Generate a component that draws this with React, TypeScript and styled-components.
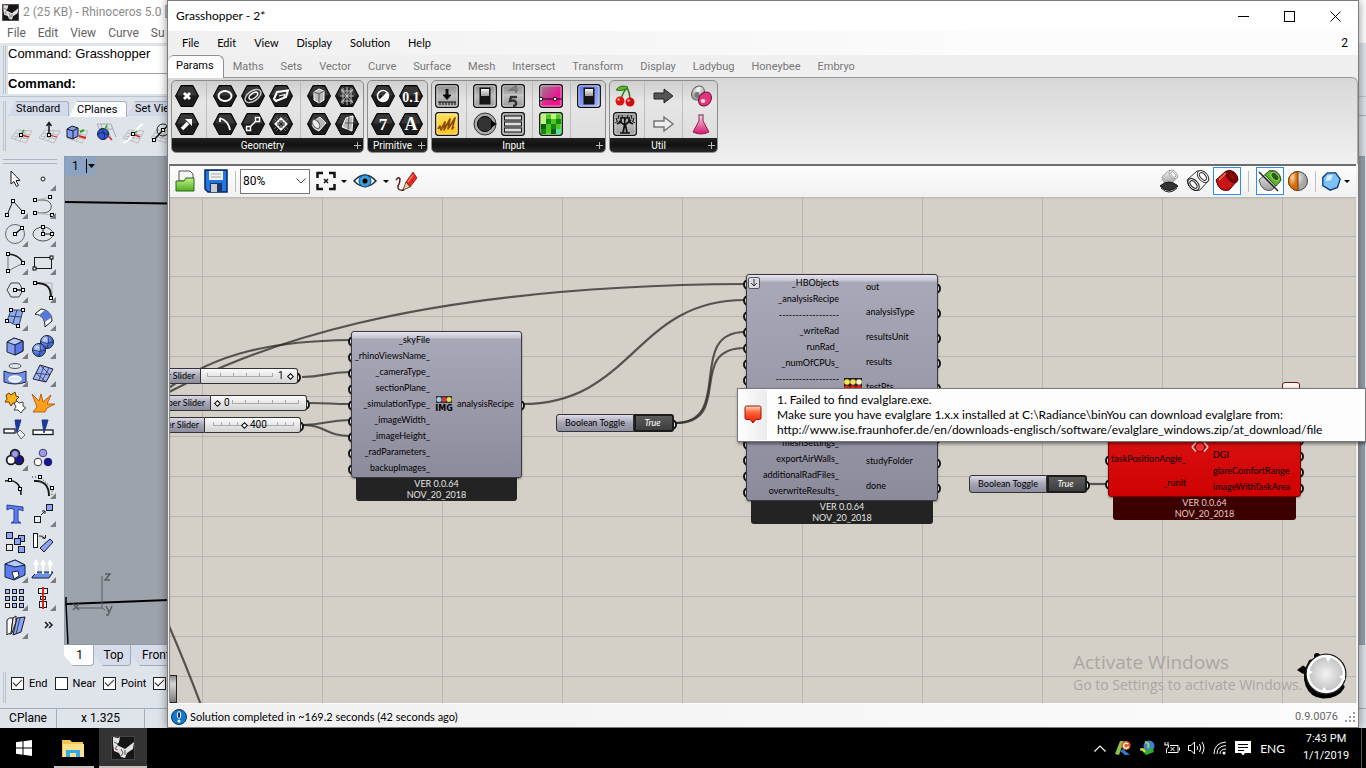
import React, { useState } from 'react';
import styled, { createGlobalStyle, css } from 'styled-components';

const UI = 'Roboto, "Open Sans", sans-serif';
const HUMAN = 'Lato, "Open Sans", sans-serif';
const SYS = '"Liberation Sans", Arial, sans-serif';

const Global = createGlobalStyle`
  * { box-sizing: border-box; }
  body { margin: 0; font-family: ${UI}; font-size: 11px; color: #000; overflow: hidden; }
  button, select, input { font: inherit; color: inherit; margin: 0; }
  button { padding: 0; border: 0; background: none; }
  svg { display: block; flex: none; }
`;

/* ---------- desktop ---------- */
const Desktop = styled.div`
  display: flex; flex-direction: column; height: 100vh; overflow: hidden;
`;
const Work = styled.main`
  position: relative; flex: 1; min-height: 0;
`;

/* ---------- Rhino ---------- */
const RhinoWindow = styled.section`
  display: flex; flex-direction: column; height: 100%;
  background: #dfe3ea; overflow: hidden; font-family: ${UI};
`;
const RhinoTitle = styled.header`
  display: flex; align-items: center; gap: 4px; height: 24px; padding-left: 2px;
  background: #fff; color: #8b8b8b; font-size: 12px; white-space: nowrap;
  span { max-width: 144px; overflow: hidden; }
`;
const RhinoMenuBar = styled.div`
  height: 19px; background: #fff;
`;
const RhinoMenu = styled.nav`
  display: flex; max-width: 167px; height: 19px; padding-left: 7px; gap: 12px; overflow: hidden;
  button { color: #5f5f5f; font-size: 12px; line-height: 19px; }
`;
const GripRow = styled.div`
  display: flex; gap: 2px; padding: 3px 10px 2px 3px; height: 54px;
  border-bottom: 1px solid #bcc3d0;
`;
const Grip = styled.i`
  width: 3px; border: solid #b9c1ce; border-width: 0 1px;
`;
const CommandPanel = styled.div`
  flex: 1; display: flex; flex-direction: column; background: #fff; font: 13px ${SYS};
  p { margin: 0; height: 28px; line-height: 15px; border-bottom: 1px solid #9aa2b1; }
  label { display: flex; align-items: center; font-weight: bold; flex: 1; padding-bottom: 2px; }
  input { flex: 1; border: 0; outline: 0; background: none; height: 16px; }
`;
const ToolbarBlock = styled.div`
  display: flex; gap: 2px; height: 59px; padding: 4px 0 5px 3px;
`;
const ToolbarColumn = styled.div`
  flex: 1; min-width: 0;
`;
const ToolTabs = styled.div`
  display: flex; height: 15px; border-bottom: 1px solid #a8b1c2;
`;
const ToolTab = styled.button<{ $on?: boolean; $w: number }>`
  flex: none; width: ${p => p.$w}px; height: ${p => (p.$on ? 16 : 15)}px; padding-left: 8px;
  font-size: 11px; line-height: 14px; position: relative; text-align: left;
  background: ${p => (p.$on ? '#fbfcfe' : '#d3d9e8')};
  border: 1px solid #a8b1c2; border-bottom: 0; border-left: 0;
  border-radius: 0 3px 0 0;
  clip-path: polygon(8px 0, 100% 0, 100% 100%, 0 100%);
`;
const ToolStrip = styled.div`
  display: flex; align-items: center; height: 33px; gap: 4px; padding-left: 1px;
  button { width: 24px; height: 24px; flex: none; }
`;
const RhinoBody = styled.div`
  flex: 1; min-height: 0; display: flex;
`;
const Sidebar = styled.aside`
  flex: none; width: 64px; padding: 3px 0 0 1px; overflow: hidden;
  &::before { content: ''; display: block; height: 3px; width: 54px; margin-left: 2px; border: solid #aab4c6; border-width: 1px 0; }
`;
const ToolGrid = styled.div`
  display: grid; grid-template-columns: 28px 28px; grid-auto-rows: 28px;
`;
const Tool = styled.button<{ $fly?: boolean }>`
  position: relative; display: grid; place-items: center;
  ${p => p.$fly && css`
    &::after {
      content: ''; position: absolute; right: 1px; bottom: 1px;
      border: solid transparent; border-width: 0 0 6px 6px; border-bottom-color: #7d7d7d;
    }
  `}
`;
const ViewColumn = styled.div`
  flex: 1; min-width: 0; display: flex; flex-direction: column;
`;
const Viewport = styled.div`
  flex: 1; min-height: 0; display: flex; flex-direction: column; justify-content: space-between;
  background: #9da3ab; border: 1px solid #8b9bb0; margin-right: 1px; overflow: hidden;
`;
const ViewLabel = styled.button`
  display: flex; align-items: center; align-self: flex-start; height: 18px; width: 30px; padding-left: 7px;
  gap: 7px; background: #8ba4c4; font-size: 12px;
`;
const ViewTabs = styled.div`
  display: flex; height: 22px;
`;
const ViewTab = styled.button<{ $on?: boolean; $w: number }>`
  flex: none; width: ${p => p.$w}px; height: 21px; padding-left: ${p => (p.$on ? 2 : 3)}px; font-size: 12px;
  background: ${p => (p.$on ? '#fff' : '#d7dcea')};
  border: 1px solid #a0aabc; border-top: 0; border-left: 0; border-radius: 0 0 4px 0;
  clip-path: polygon(0 0, 100% 0, 100% 100%, 9px 100%, 0 50%);
`;
const Osnap = styled.div`
  display: flex; gap: 3px; height: 41px; padding: 5px 0 5px 3px;
`;
const SnapList = styled.div`
  display: flex; gap: 7px; padding: 4px 0 0 2px; align-items: flex-start;
`;
const Snap = styled.label`
  display: flex; align-items: center; gap: 5px; font-size: 11px; height: 14px; white-space: nowrap;
  input {
    appearance: none; width: 13px; height: 13px; border: 1px solid #222; background: #fff; display: grid; place-items: center;
  }
  input:checked::after {
    content: ''; width: 8px; height: 4px; margin-top: -3px; border: solid #222; border-width: 0 0 1px 1px; transform: rotate(-45deg);
  }
`;
const RhinoStatus = styled.footer`
  display: flex; height: 20px; border-top: 1px solid #a2acbd;
`;
const StatusCell = styled.div<{ $w: number }>`
  flex: none; width: ${p => p.$w}px; border-right: 1px solid #a2acbd; text-align: center; font-size: 12px; line-height: 19px;
`;

/* ---------- Grasshopper window ---------- */
const GhWindow = styled.section`
  position: absolute; left: 167px; right: 7px; top: 0; bottom: 0;
  display: flex; flex-direction: column; border: 1px solid #7c7c7c; background: #f0f0f0;
  box-shadow: 0 0 9px rgba(0, 0, 0, .45);
`;
const GhTitle = styled.header`
  display: flex; align-items: center; height: 30px; background: #fff; padding-left: 8px; font-size: 12px;
`;
const GhName = styled.h1`
  flex: 1; margin: 0; font: 12px ${HUMAN}; padding-bottom: 2px;
`;
const WinButton = styled.button`
  width: 46px; height: 30px; display: grid; place-items: center;
`;
const GhMenu = styled.nav`
  display: flex; align-items: center; gap: 18px; height: 24px; padding: 0 10px 1px 14px;
  background: linear-gradient(90deg, #f0f0f0, #fcfcfc 70%);
  button { font: 11px ${HUMAN}; }
  span { margin-left: auto; font-size: 12px; }
`;
const RibbonTabs = styled.div`
  display: flex; height: 23px; position: relative; z-index: 1;
`;
const RibbonTab = styled.button<{ $on?: boolean }>`
  height: 23px; padding: ${p => (p.$on ? '0 9px 3px 8px' : '0 8px 0 9px')}; color: ${p => (p.$on ? '#000' : '#777')};
  font-size: 11px;
  ${p => p.$on && css`
    background: #fff; border: 1px solid #8f8f8f; border-width: 1px 1px 0 0; border-radius: 6px 6px 0 0;
  `}
`;
const Ribbon = styled.div`
  display: flex; gap: 3px; height: 87px; padding: 2px 3px 0;
  margin-top: -1px; border-top: 1px solid #999; border-right: 1px solid #aaa; border-radius: 0 6px 0 0;
  background: linear-gradient(#d8d8d8, #f0f0f0);
`;
const Group = styled.div`
  display: flex; flex-direction: column; height: 73px; border: 1px solid #8c8c8c; border-radius: 5px; overflow: hidden;
  background: linear-gradient(#cfcfcf, #e6e6e6 30%, #dadada);
`;
const GroupTools = styled.div`
  display: flex; flex: 1; padding: 1px 2px 0 1px;
`;
const GroupBlock = styled.div`
  display: grid; grid-auto-flow: column; grid-template-rows: 28px 28px; grid-auto-columns: 28px;
  & + & { border-left: 1px solid #bdbdbd; margin-left: 5px; padding-left: 4px; }
  button { display: grid; place-items: center; }
`;
const GroupName = styled.div`
  display: flex; align-items: center; height: 14px; background: linear-gradient(#222, #111 50%, #2a2a2a); color: #fff; font-size: 10px;
  span { flex: 1; text-align: center; padding-right: 10px; }
  button { width: 12px; height: 12px; display: grid; place-items: center; margin-left: -12px; }
`;
const CanvasPanel = styled.div`
  flex: 1; min-height: 0; display: flex; flex-direction: column; margin-left: 1px; margin-right: 2px;
  border: solid #6d6d6d; border-width: 2px 0 0 1px; border-left-color: #8a8a8a;
`;
const CanvasBar = styled.div`
  display: flex; align-items: center; height: 31px; padding: 0 5px 1px 0; background: linear-gradient(#fdfdfd, #f1f1f1);
`;
const BarButton = styled.button<{ $w: number; $on?: boolean }>`
  display: grid; place-items: center; width: ${p => p.$w}px; height: 28px;
  ${p => p.$on && css`border: 1px solid #2e8cf0; background: #fff;`}
`;
const BarRule = styled.i<{ $m: number }>`
  width: 1px; height: 21px; background: #bdbdbd; margin: 0 ${p => p.$m}px;
`;
const Caret = styled.i`
  width: 0; height: 0; border: solid transparent; border-width: 3px 3px 0; border-top-color: #000; margin: 0 1px;
`;
const Spacer = styled.div`
  flex: 1;
`;
const Combo = styled.label`
  display: flex; align-items: center; width: 70px; height: 25px; margin-right: 2px; border: 1px solid #777; background: #fff;
  select { appearance: none; flex: 1; width: 100%; border: 0; background: none; padding: 0 2px; font-size: 12px; outline: 0; }
  svg { margin: 0 3px 0 -14px; pointer-events: none; }
`;
const Canvas = styled.div`
  position: relative; flex: 1; min-height: 0; overflow: hidden; font-family: ${HUMAN}; font-size: 9px;
  background-color: #d4d0c8; box-shadow: inset 0 1px 2px #b4b1aa;
  background-image: linear-gradient(#bab7b0 1px, transparent 1px), linear-gradient(90deg, #bab7b0 1px, transparent 1px);
  background-size: 100% 40px, 120px 100%; background-position: 0 39px, 32px 0;
`;
const Wires = styled.svg`
  position: absolute; inset: 0; width: 100%; height: 100%;
`;
const NodeBox = styled.article<{ $x: number; $y: number; $w: number }>`
  position: absolute; left: ${p => p.$x}px; top: ${p => p.$y}px; width: ${p => p.$w}px; isolation: isolate;
`;
const NodeBody = styled.div<{ $error?: boolean }>`
  display: grid; grid-template-columns: auto 27px 1fr; padding-bottom: 1px;
  border: 1px solid ${p => (p.$error ? '#7a0000' : '#38383e')}; border-radius: 3px;
  box-shadow: 0 1px 2px rgba(0, 0, 0, .4);
  background: ${p => p.$error
    ? 'linear-gradient(#e01818, #cf0202)'
    : 'linear-gradient(#e6e4f0, #c4c2d0 6px, #a9a8b8 7px, #8c8b9c)'};
`;
const Ports = styled.ul<{ $out?: boolean; $w?: number }>`
  display: flex; flex-direction: column; margin: 0; padding: 0; list-style: none;
  width: ${p => (p.$w ? p.$w + 'px' : 'auto')};
  li {
    position: relative; flex: 1 0 16px; display: flex; align-items: center; white-space: nowrap; padding-bottom: 2px;
    justify-content: ${p => (p.$out ? 'flex-start' : 'flex-end')};
  }
  li::before {
    content: ''; position: absolute; z-index: -1; ${p => (p.$out ? 'right' : 'left')}: -4px; top: calc(50% - 4px);
    width: 7px; height: 7px; border-radius: 50%; border: 2px solid #111; background: #fff;
  }
`;
const NodeIcon = styled.div`
  display: grid; place-items: center;
`;
const NodeFooter = styled.div<{ $error?: boolean }>`
  margin: 0 5px; height: 23px; text-align: center; line-height: 11px;
  border-radius: 0 0 3px 3px; color: ${p => (p.$error ? '#e8c8c8' : '#e4e4e4')}; background: ${p => (p.$error ? '#3c0000' : '#232323')};
`;
const Expand = styled.button`
  position: absolute; left: 2px; top: 3px; width: 12px; height: 12px; display: grid; place-items: center;
  border: 1px solid #555; border-radius: 2px; background: #dcdce4;
`;
const InlineNode = styled.div<{ $x: number; $y: number; $w: number; $h: number }>`
  position: absolute; left: ${p => p.$x}px; top: ${p => p.$y}px; width: ${p => p.$w}px; height: ${p => p.$h}px;
  isolation: isolate; display: flex;
  &::after {
    content: ''; position: absolute; z-index: -1; right: -3px; top: calc(50% - 4px); width: 7px; height: 7px;
    border-radius: 50%; border: 2px solid #111; background: #fff;
  }
`;
const NodeLabel = styled.span<{ $w: number; $center?: boolean }>`
  flex: none; width: ${p => p.$w}px; padding: 0 5px 2px; display: flex; align-items: center; white-space: nowrap;
  justify-content: ${p => (p.$center ? 'center' : 'flex-end')};
  border: 1px solid #333; border-radius: 3px 0 0 3px; background: linear-gradient(#dddbe8, #a5a4b4 50%, #8e8d9e);
`;
const Track = styled.span`
  position: relative; flex: 1; border: 1px solid #333; border-left: 0; border-radius: 0 3px 3px 0;
  background: linear-gradient(#fbfbfb, #d2d2d2);
  svg { position: absolute; top: 0; left: 0; }
  input { position: absolute; inset: 0; width: 100%; height: 100%; appearance: none; background: none; padding: 0 4px; }
  input::-webkit-slider-thumb {
    appearance: none; width: 5px; height: 5px; border: 1px solid #000; background: #fff; transform: rotate(45deg);
  }
`;
const Reading = styled.output<{ $x: number }>`
  position: absolute; left: ${p => p.$x}px; top: 0; height: 100%; display: flex; align-items: center; padding-bottom: 2px;
  font: 10px ${UI};
`;
const PanelStub = styled.div`
  position: absolute; left: -2px; top: 478px; width: 9px; height: 28px;
  border: 1px solid #222; background: linear-gradient(#8c8c8c, #d6d6d6 30%, #7c7c7c);
`;
const ToggleButton = styled.button`
  flex: 1; border: 2px solid #1d1d1d; border-radius: 0 3px 3px 0; color: #fff; font-style: italic;
  background: linear-gradient(#5c5c5c, #3d3d3d); padding: 0 3px 2px 0;
`;
const Balloon = styled.i`
  position: absolute; left: 1112px; top: 185px; width: 18px; height: 16px;
  border: 1px solid #6b1a10; border-radius: 3px; background: linear-gradient(#fff, #ffb090);
`;
const Watermark = styled.div`
  position: absolute; right: 51px; bottom: 9px; width: 232px; color: #aaa7a1; white-space: nowrap;
  font-family: "Open Sans", sans-serif; font-size: 14px; line-height: 19px;
  strong { display: block; font-size: 19px; font-weight: 400; line-height: 26px; }
`;
const Compass = styled.svg`
  position: absolute; right: 7px; bottom: 2px;
`;
const GhStatus = styled.footer`
  display: flex; align-items: center; gap: 3px; height: 24px; padding: 2px 2px 0 3px; border-top: 1px solid #fff;
  background: linear-gradient(90deg, #f0f0f0, #fcfcfc); font: 11px ${HUMAN};
  span { flex: 1; padding-bottom: 1px; }
  em { font: 11px ${UI}; color: #666; margin-right: 3px; }
`;
const Tooltip = styled.div`
  position: absolute; z-index: 5; left: 737px; right: 0; top: 388px; height: 54px; display: flex; gap: 10px;
  border: 1px solid #767676; background: #fdfdfd; box-shadow: 1px 2px 3px rgba(0, 0, 0, .45); white-space: nowrap;
  font: 12px/15px ${HUMAN};
  p { margin: 0; padding-top: 3px; }
`;
const TooltipIcon = styled.div`
  width: 29px; margin: 1px 0; padding-bottom: 1px; display: grid; place-items: center; background: linear-gradient(90deg, #fdfdfd, #ececec);
`;

/* ---------- task bar ---------- */
const TaskBar = styled.footer`
  display: flex; flex: none; height: 40px; background: #000; color: #fff;
`;
const TaskButton = styled.button<{ $on?: boolean; $open?: boolean }>`
  position: relative; width: 48px; display: grid; place-items: center; background: ${p => (p.$on ? '#333' : 'none')};
  margin-right: 1px; margin-left: ${p => (p.$on ? 1 : 0)}px;
  ${p => p.$open && css`
    &::after {
      content: ''; position: absolute; bottom: 0; left: ${p.$on ? 0 : 5}px; right: ${p.$on ? 0 : 3}px; height: 2px; background: #c9c1bd;
    }
  `}
`;
const Tray = styled.div`
  margin-left: auto; display: flex; align-items: center; gap: 8px; padding-right: 4px;
  button { display: grid; place-items: center; }
`;
const Lang = styled.button`
  && { font: 12px ${HUMAN}; margin-left: 1px; }
`;
const Clock = styled.time`
  width: 66px; margin-right: -6px; text-align: center; font: 11px/17px ${UI}; padding-bottom: 2px;
`;
const PeekEdge = styled.i`
  width: 1px; align-self: stretch; background: #555;
`;

/* ---------- icons ---------- */
const Ink = '#1a1a1a';
const Blue = '#7f9cf5';
const Dot = ({ x, y }: { x: number; y: number }) => (
  <rect x={x - 1.5} y={y - 1.5} width="3" height="3" fill="#fff" stroke="#000" />
);
const Ic = ({ s = 24, children }: { s?: number; children: React.ReactNode }) => (
  <svg width={s} height={s} viewBox="0 0 24 24" fill="none" stroke={Ink} strokeWidth="1" aria-hidden="true">{children}</svg>
);
const Mesh = () => (
  <path d="M2 17 8 9 23 10M2 17 17 22 23 10M6 12 21 14M4 15 19 18M6 18.500 12 9.500M11 20 17 9.700" stroke="#b4b4b4" strokeWidth=".8" />
);
const Hex = ({ children }: { children?: React.ReactNode }) => (
  <svg width="26" height="24" viewBox="0 0 26 24" fill="none" stroke="#fff" strokeWidth="2" aria-hidden="true">
    <polygon points="7,1.5 19,1.5 24.5,12 19,22.5 7,22.5 1.5,12" fill="#1c1c1c" stroke="#000" strokeWidth="1" strokeLinejoin="round" />
    <path d="M7.500 2.600h11L23 11.500H3z" fill="#4a4a4a" stroke="none" opacity=".6" />
    {children}
  </svg>
);
const Box = ({ fill = 'url(#steel)', children }: { fill?: string; children?: React.ReactNode }) => (
  <svg width="24" height="24" viewBox="0 0 24 24" fill="none" stroke="#111" aria-hidden="true">
    <rect x=".7" y=".7" width="22.600" height="22.600" rx="2.500" fill={fill} stroke="#111" strokeWidth="1.300" />
    <rect x="1.900" y="1.900" width="20.200" height="20.200" rx="1.500" stroke="#fff" strokeOpacity=".55" />
    {children}
  </svg>
);
const Glyph = ({ children, size = 17 }: { children: string; size?: number }) => (
  <text x="13" y="18" textAnchor="middle" fontFamily="Liberation Serif, serif" fontWeight="bold" fontSize={size} fill="#fff" stroke="none">{children}</text>
);
const Defs = () => (
  <svg width="0" height="0" aria-hidden="true">
    <defs>
      <linearGradient id="steel" x2="0" y2="1"><stop stopColor="#8a8a8a" /><stop offset=".5" stopColor="#bdbdbd" /><stop offset="1" stopColor="#9a9a9a" /></linearGradient>
      <linearGradient id="gold" x2="0" y2="1"><stop stopColor="#ffdf60" /><stop offset="1" stopColor="#ffc61a" /></linearGradient>
      <linearGradient id="pink" x2="1" y2="1"><stop stopColor="#8d8d8d" /><stop offset=".6" stopColor="#e81890" /><stop offset="1" stopColor="#ff0a90" /></linearGradient>
      <linearGradient id="indigo" x2="1" y2="1"><stop stopColor="#5a74e8" /><stop offset="1" stopColor="#a9baff" /></linearGradient>
      <radialGradient id="bead" cx=".35" cy=".3"><stop stopColor="#d8e2ff" /><stop offset="1" stopColor="#4666d8" /></radialGradient>
      <radialGradient id="dial"><stop stopColor="#f4f4f4" /><stop offset="1" stopColor="#bdbdbd" /></radialGradient>
      <radialGradient id="pearl" cx=".35" cy=".3"><stop stopColor="#fff" /><stop offset="1" stopColor="#a8a8a8" /></radialGradient>
      <radialGradient id="amber" cx=".4" cy=".3"><stop stopColor="#ffd9a0" /><stop offset="1" stopColor="#d46a08" /></radialGradient>
      <linearGradient id="alert" x2="0" y2="1"><stop stopColor="#ffd9c8" /><stop offset=".35" stopColor="#ff6a3c" /><stop offset="1" stopColor="#e81404" /></linearGradient>
      <linearGradient id="leaf" x2="0" y2="1"><stop stopColor="#c6ef92" /><stop offset="1" stopColor="#4fb01e" /></linearGradient>
      <linearGradient id="rose" x2="0" y2="1"><stop stopColor="#fbd8e6" /><stop offset="1" stopColor="#d41468" /></linearGradient>
      <linearGradient id="wire" x2="0" y2="1"><stop stopColor="#f4f4f4" /><stop offset="1" stopColor="#9c9c9c" /></linearGradient>
    </defs>
  </svg>
);

const RhinoMark = ({ s = 17 }: { s?: number }) => (
  <svg width={s} height={s} viewBox="0 0 24 24" aria-hidden="true">
    <rect x=".5" y=".5" width="23" height="23" fill="#161616" stroke="#444" />
    <path d="M2 1 7 2 9 1 8 6 6 9 10 11 14 13 23 6 22 13 16 17 14 22 10 21 8 17 3 15 2 8Z" fill="#e2e2e2" />
    <path d="M3 6 7 8M6 10 4 13M10 13 12 17 10 20M14 14 14 19" stroke="#555" strokeWidth="1" fill="none" />
    <path d="M4.500 13 6.500 14" stroke="#c33" strokeWidth="1.300" />
  </svg>
);

type ToolDef = [string, React.ReactNode, boolean?];
const cplaneTools: ToolDef[] = [
  ['Set CPlane origin', <Ic><Mesh /><path d="M12 14 20 16" stroke="#d22" strokeWidth="1.500" /><path d="M12 14 15 9" stroke="#2a2" strokeWidth="1.500" /><Dot x={12} y={14} /></Ic>],
  ['Set CPlane elevation', <Ic><Mesh /><path d="M12 14 20 16" stroke="#d22" /><path d="M12 13V2M9.500 5 12 1.500 14.500 5" strokeWidth="1.500" /><Dot x={12} y={14} /></Ic>],
  ['Set CPlane to object', <Ic><Mesh /><path d="M2 8 7 5 13 7V15L8 18 2 16Z" fill={Blue} /><path d="M2 8 8 10 13 7M8 10V18" /><path d="M14 15 21 17" stroke="#d22" strokeWidth="2" /><path d="M15 11 19 9" stroke="#2a2" strokeWidth="2" /></Ic>],
  ['Set CPlane to surface', <Ic><path d="M4 3H18L23 16M8 3 12 18M13 3 18 18M6 8H20M4 3 9 14" stroke="#aaa" /><circle cx="10" cy="13" r="5.500" fill="#2f56d8" stroke="#123" /><path d="M8 8Q13 12 11 18M5 13Q10 10 15 14" stroke="#123" strokeWidth=".8" /><path d="M15 15 19 19" stroke="#d22" strokeWidth="1.500" /><path d="M12 8 14 4" stroke="#2a2" strokeWidth="1.500" /></Ic>],
  ['CPlane perpendicular to curve', <Ic><Mesh /><path d="M2 22C10 20 10 14 12 13S17 5 22 3" stroke="#fff" strokeWidth="2" /><path d="M12 13 19 16" stroke="#d22" strokeWidth="1.500" /><path d="M12 13 16 10" stroke="#2a2" strokeWidth="1.500" /><Dot x={12} y={13} /></Ic>],
  ['Rotate CPlane', <Ic><Mesh /><circle cx="14" cy="9" r="6" /><path d="M5 19 14 9 20 4" strokeWidth="1.500" /><Dot x={5} y={19} /><Dot x={14} y={9} /></Ic>],
];

const sideTools: ToolDef[] = [
  ['Select', <Ic><path d="M8 5V18L11 15.500 13.500 20.500 15.500 19.500 13 14.500H17Z" fill="#fff" /></Ic>],
  ['Point', <Ic><circle cx="12" cy="13" r="2" fill="#fff" /></Ic>, true],
  ['Polyline', <Ic><path d="M4 21 10 7 20 18" /><Dot x={4} y={21} /><Dot x={10} y={7} /><Dot x={20} y={18} /></Ic>, true],
  ['Control point curve', <Ic><path d="M5 6H12C23 6 23 19 12 19H5" stroke="#555" /><path d="M5 6 19 3M5 19 20 21" stroke="#bbb" /><Dot x={4} y={6} /><Dot x={19} y={3} /><Dot x={4} y={19} /><Dot x={21} y={21} /></Ic>, true],
  ['Circle', <Ic><circle cx="12" cy="12" r="9.500" stroke="#666" /><path d="M12 12 19 6" strokeWidth="1.500" /><Dot x={12} y={12} /><Dot x={19} y={6} /></Ic>, true],
  ['Ellipse', <Ic><ellipse cx="12" cy="12" rx="10" ry="7" stroke="#555" /><path d="M12 5V12H21" /><Dot x={12} y={5} /><Dot x={12} y={12} /><Dot x={21} y={12} /></Ic>, true],
  ['Arc', <Ic><path d="M5 4C12 4 18 8 20 13" strokeWidth="1.500" /><path d="M5 4V21L20 13" stroke="#777" /><Dot x={5} y={4} /><Dot x={20} y={13} /><Dot x={5} y={21} /></Ic>, true],
  ['Rectangle', <Ic><rect x="3.500" y="7.500" width="17" height="11" /><Dot x={20.5} y={7.5} /><Dot x={3.5} y={18.5} /></Ic>, true],
  ['Polygon', <Ic><path d="M8 5H16L20 12 16 19H8L4 12Z" stroke="#444" /><path d="M12 12H20" strokeWidth="1.500" /><Dot x={12} y={12} /><Dot x={20} y={12} /></Ic>, true],
  ['Fillet curves', <Ic><path d="M4 5H21V20" stroke="#aaa" /><path d="M4 5C16 5 20 9 20 20" strokeWidth="2" /><Dot x={4} y={5} /><Dot x={20} y={20} /></Ic>, true],
  ['Surface from points', <Ic><path d="M8 4H20L17 16 15 20 4 15Z" fill="#8ea8f4" stroke="#345" /><path d="M6 10 18 11M14 4 10 17" stroke="#345" /><Dot x={8} y={4} /><Dot x={20} y={4} /><Dot x={4} y={15} /><Dot x={15} y={20} /></Ic>, true],
  ['Blend surface', <Ic><path d="M4 8 10 3C17 4 21 8 21 15L14 21C14 13 11 9 4 8Z" fill="#fff" /><path d="M8 9 14 4C18 6 20 8 21 11L14 16C13 12 11 10 8 9Z" fill="#5878e0" stroke="none" /></Ic>, true],
  ['Box', <Ic><path d="M4 8 11 4 20 7V17L12 21 4 18Z" fill={Blue} stroke="#223" /><path d="M4 8 12 11 20 7 11 4Z" fill="#b9c8fb" stroke="#223" /><path d="M12 11 20 7V17L12 21Z" fill="#5b78e8" stroke="#223" /></Ic>, true],
  ['Boolean union', <Ic><circle cx="16" cy="8" r="6.500" fill="url(#bead)" stroke="#123" /><circle cx="8" cy="16" r="6.500" fill="url(#bead)" stroke="#123" /><path d="M2 16Q8 19 14 16M9 10Q11 16 8 22M10 8Q16 11 22 8M17 2Q19 8 16 14" stroke="#235" strokeWidth=".8" /></Ic>, true],
  ['Project to surface', <Ic><ellipse cx="12" cy="4" rx="6" ry="2.500" stroke="#555" /><path d="M1 9Q12 14 23 9V20Q12 24 1 20Z" fill="#6f90ea" stroke="#224" /><ellipse cx="12" cy="17" rx="6" ry="3" fill="#dfe7ff" stroke="#fff" strokeWidth="1.500" /></Ic>, true],
  ['Mesh', <Ic><path d="M9 3 22 7 15 20 2 17Z" fill="#9db4f6" stroke="#223" /><path d="M5 11 19 13M13 4 8 18M18 6 11 19M9 3 19 13M5 11 15 20" stroke="#335" strokeWidth=".8" /></Ic>, true],
  ['Explode plugin', <Ic><path d="M3 5 6 3 8 5 12 2 13 6 16 7 13 10 15 13 10 13 8 16 6 12 2 12 4 9Z" fill="#ffb21c" stroke="#6b3c00" /><path d="M11 13 14 11 16 13 20 12 20 16 23 18 20 20 18 23 15 20 11 20 13 17Z" fill="#fff" stroke="#444" /></Ic>],
  ['Explode', <Ic><path d="M1 4 8 11 10 4 12 12 20 5 16 14 24 14 16 18 14 22H2L6 17Z" fill="#ff9d1c" stroke="#a84c00" strokeWidth=".8" /></Ic>],
  ['Trim', <Ic><path d="M12 2H18L14 15Z" fill="#1e3a96" stroke="#1e3a96" /><rect x="1" y="11" width="11" height="4" fill="#fff" strokeWidth="1.300" /><path d="M14 15 17 12 22 17 18 21Z" fill="#eee" stroke="#666" /></Ic>],
  ['Split', <Ic><rect x="2" y="12" width="20" height="4.500" fill="#fff" strokeWidth="1.300" /><path d="M11 2H17L13 15Z" fill="#1e3a96" stroke="#1e3a96" /></Ic>],
  ['Group', <Ic><g strokeWidth="2.500"><circle cx="12" cy="8" r="4" /><circle cx="8" cy="14" r="4" /><circle cx="16" cy="14" r="4" /></g><circle cx="8" cy="14" r="3.500" fill="#fff" stroke="none" /><circle cx="16" cy="14" r="3.500" fill="#17178a" stroke="none" /><circle cx="12" cy="8" r="3.500" fill="#9a9af5" stroke="#446" /></Ic>, true],
  ['Ungroup', <Ic><circle cx="12" cy="7" r="3.800" fill="#9a9af5" stroke="#446" /><circle cx="7" cy="16" r="3.800" fill="#fff" stroke="#333" /><circle cx="17" cy="16" r="3.800" fill="#17178a" stroke="#17178a" /></Ic>],
  ['Edit points', <Ic><path d="M2 7C12 5 18 10 18 21" strokeWidth="1.500" /><Dot x={7} y={6} /><Dot x={17} y={15} /></Ic>],
  ['Control points on', <Ic><path d="M3 7C13 6 18 12 18 22" strokeWidth="2" /><path d="M1 3H9L21 14V21" strokeDasharray="1 2" /><Dot x={9} y={3} /><Dot x={21} y={14} /></Ic>, true],
  ['Text', <Ic><path d="M4 3 20 5V9L18 8 15 7.500V19L18 21H8L11 19V7L7 6.500 4 8Z" fill="#5b7df0" stroke="#24409c" /></Ic>],
  ['Move', <Ic><rect x="3.500" y="14.500" width="6" height="6" fill="#eee" /><rect x="15.500" y="2.500" width="6" height="6" fill="#8ba5f8" /><path d="M10 13 14 9M11 9H14V12" /></Ic>, true],
  ['Copy', <Ic><rect x="3.500" y="2.500" width="6" height="6" fill="#8ba5f8" /><rect x="15.500" y="5.500" width="6" height="6" fill="#8ba5f8" /><rect x="11.500" y="8.500" width="6" height="6" fill="#8ba5f8" /><rect x="3.500" y="14.500" width="6" height="6" fill="#eee" /><rect x="15.500" y="16.500" width="6" height="6" fill="#8ba5f8" /></Ic>],
  ['Rotate', <Ic><rect x="2.500" y="3.500" width="4" height="14" fill="#fff" /><path d="M8 6Q12 5 14 9M11 8H14.500V5" /><path d="M9 18 19 9 22 12 13 22Z" fill="#8ba5f8" /></Ic>],
  ['Solid tools', <Ic><path d="M2 6 12 2 22 7V17L11 22 2 19Z" fill="#5b7df0" stroke="#124" /><path d="M2 6 12 9 22 7 12 2Z" fill="#b9c8fb" stroke="#124" /><path d="M9 14 15 13 16 18 11 21Z" fill="#fff" stroke="#222" /></Ic>, true],
  ['Project', <Ic><path d="M1 19 6 14H22L18 20H1Z" fill="#6f90ea" stroke="#124" /><path d="M5 16V4M12 16V4M19 16V4M3 7 5 3 7 7M10 7 12 3 14 7M17 7 19 3 21 7" stroke="#fff" strokeWidth="2" /></Ic>, true],
  ['Array', <Ic>{[3.5, 10.5, 17.5].map(y => [2.5, 9.5, 16.5].map(x => <rect key={x + '-' + y} x={x} y={y} width="4" height="4" fill={y === 17.5 && x === 2.5 ? '#fff' : '#a9bcfa'} />))}</Ic>, true],
  ['Align', <Ic><rect x="7.500" y="2.500" width="9" height="5" fill="#eee" /><rect x="9.500" y="10.500" width="5" height="3" fill="#eee" /><rect x="8.500" y="15.500" width="7" height="6" fill="#eee" /><path d="M12 1V23" stroke="#d22" strokeWidth="2" /></Ic>, true],
  ['Bend', <Ic><path d="M4 6Q6 3 10 4L8 20Q4 19 4 21Z" fill="#fff" /><path d="M10 4 13 2V8L9 19 8 20Z" fill="#ddd" /><path d="M14 4 22 3 18 18 10 21Z" fill="#8ba5f8" /><path d="M17 4 13 20" stroke="#345" /></Ic>, true],
];

const hexGeo1 = [
  ['Point', <Hex><path d="M10 9 16 15M16 9 10 15" strokeWidth="2.800" /></Hex>],
  ['Vector', <Hex><path d="M8 17 14 11" strokeWidth="3.500" /><path d="M11 7H18V14Z" fill="#fff" stroke="none" /></Hex>],
] as ToolDef[];
const hexGeo2 = [
  ['Circle', <Hex><ellipse cx="13" cy="12" rx="6.500" ry="5" /></Hex>],
  ['Circular arc', <Hex><path d="M8 6C14 8 17 12 18 18M8 6 8 10" strokeWidth="1.800" /></Hex>],
  ['Curve', <Hex><g transform="rotate(-35 13 12)" strokeWidth="1.400"><ellipse cx="13" cy="12" rx="9" ry="5" stroke="#ccc" /><ellipse cx="13.500" cy="12" rx="5" ry="2.500" /></g></Hex>],
  ['Line', <Hex><path d="M8 17 18 7" strokeWidth="1.500" /><rect x="6.500" y="14.500" width="4" height="4" fill="#222" strokeWidth="1.500" /><rect x="15.500" y="5.500" width="4" height="4" fill="#222" strokeWidth="1.500" /></Hex>],
  ['Plane', <Hex><path d="M6 15 9 8 20 6.500 18 13 8 17Z" strokeWidth="2" /><path d="M11 12 17 10.500 16 13" strokeWidth="1.200" /></Hex>],
  ['Rectangle', <Hex><path d="M13 6.500 18.500 12 13 17.500 7.500 12Z" /><path d="M8 5 20 17M18 5 6 17M6 7 18 19M20 7 8 19" stroke="#888" strokeWidth=".7" /></Hex>],
] as ToolDef[];
const hexGeo3 = [
  ['Box', <Hex><path d="M8 8 13 5 18 7V16L13 19 8 16Z" fill="#bbb" strokeWidth="1" /><path d="M8 8 13 10 18 7M13 10V19" stroke="#555" strokeWidth="1" /></Hex>],
  ['Brep', <Hex><path d="M8 9 14 5 20 11 13 19Q7 17 6 13Z" fill="#b8b8b8" stroke="#eee" strokeWidth="1" /><ellipse cx="10" cy="12" rx="3" ry="5" transform="rotate(-35 10 12)" fill="#eee" stroke="#555" strokeWidth="1" /></Hex>],
  ['Mesh', <Hex><path d="M7 7H19M6 12H20M7 17H19M9 4V20M13 3V21M17 4V20M7 5 19 19M19 5 7 19" strokeWidth=".9" stroke="#ccc" /></Hex>],
  ['Surface', <Hex><path d="M12 6 19 4 18 19 8 15Z" fill="#bbb" strokeWidth="1" /><path d="M11 11 19 11M15 5 14 18" stroke="#555" strokeWidth="1" /></Hex>],
] as ToolDef[];
const hexPrim = [
  ['Boolean', <Hex><circle cx="13" cy="12" r="5.500" strokeWidth="1.500" /><path d="M17 8A5.500 5.500 0 0 1 9 16Z" fill="#fff" stroke="none" /></Hex>],
  ['Integer', <Hex><Glyph>7</Glyph></Hex>],
  ['Number', <Hex><Glyph size={14}>0.1</Glyph></Hex>],
  ['Text', <Hex><Glyph size={18}>A</Glyph></Hex>],
] as ToolDef[];
const inp1 = [
  ['Import', <Box><path d="M12 5V14" strokeWidth="3" /><path d="M8 11H16L12 15.500Z" fill="#000" /><path d="M3 18H21M5 18V21M8 18V21M11 18V21M14 18V21M17 18V21M20 18V21" /></Box>],
  ['Graph scribble', <Box fill="url(#gold)"><path d="M3 17 5 14 6 18 10 10 9 18 15 7 13 17 20 6 17 17 19 15" stroke="#8a4b08" strokeWidth="1.700" strokeLinejoin="round" /></Box>],
] as ToolDef[];
const inp2 = [
  ['Button', <Box><rect x="7" y="4" width="10" height="16" fill="#161616" /><rect x="8" y="5" width="8" height="7" fill="url(#wire)" stroke="none" /></Box>],
  ['Control knob', <svg width="24" height="24" viewBox="0 0 24 24" aria-hidden="true"><circle cx="12" cy="12" r="11" fill="#a9a9a9" stroke="#333" /><circle cx="12" cy="12" r="7.500" fill="#333" stroke="#000" /><path d="M18 8 23.500 12 18 16Z" /></svg>],
  ['Digit scroller', <Box><path d="M15 9V2L9 6H17" strokeWidth="2" stroke="#777" /><path d="M16 13H10L9 17C16 15 17 22 12 22" strokeWidth="2.500" stroke="#333" /><path d="M2 11H22" stroke="#ddd" strokeOpacity=".6" /></Box>],
  ['Value list', <Box><g fill="#ddd"><rect x="3.500" y="4" width="17" height="4" /><rect x="3.500" y="10" width="17" height="4" /><rect x="3.500" y="16" width="17" height="4" /></g></Box>],
] as ToolDef[];
const inp3 = [
  ['Gradient', <Box fill="url(#pink)"><path d="M1 15H23" /><circle cx="2" cy="15" r="1.800" fill="#fff" /><circle cx="16" cy="15" r="1.800" fill="#fff" /></Box>],
  ['Image sampler', <Box fill="#4ec81c"><g stroke="none"><path d="M2 2H7V7H2ZM12 2H17V7H12ZM2 7H7V12H2Z" fill="#c6f08c" /><path d="M7 7H12V12H7ZM17 7H22V12H17ZM2 17H7V22H2ZM12 12H17V17H12Z" fill="#118a12" /><path d="M17 17H22V22H17Z" fill="#4fe0b0" /><path d="M2 12H7V17H2ZM12 17H17V22H12Z" fill="#0c5e0e" /></g></Box>],
] as ToolDef[];
const inp4 = [
  ['Boolean toggle', <Box fill="url(#indigo)"><rect x="7" y="4" width="10" height="16" fill="#161616" /><rect x="8" y="5" width="8" height="7" fill="url(#wire)" stroke="none" /></Box>],
] as ToolDef[];
const util1 = [
  ['Cherry picker', <svg width="24" height="24" viewBox="0 0 24 24" fill="none" aria-hidden="true"><path d="M8 15Q10 8 14 4Q17 9 17 16" stroke="#2b7a16" strokeWidth="1.500" /><path d="M3 6Q7 0 15 3Q11 8 3 6Z" fill="#5cb52a" stroke="#2b7a16" /><circle cx="7" cy="17" r="4.500" fill="#e01212" /><circle cx="17" cy="18" r="4.500" fill="#d00e0e" /><circle cx="5.500" cy="15.500" r="1.200" fill="#ffb4b4" /><circle cx="15.500" cy="16.500" r="1.200" fill="#ffb4b4" /></svg>],
  ['Data tree', <Box><path d="M10 21 11.500 13 6 9M11.500 13 12 5M12 13 18 8M14 21 12.500 13M8 10 4 12M16 10 20 12M8 10 8 5M16 10 16 5M7 21H17" strokeWidth="1.700" /><path d="M4 9 3 6M20 9 21 6M10 7 9 3M14 7 15 3M5 7 6 3M19 7 18 3M2 11 5 9M22 11 19 9M12 8 10 5M12 8 14 5" /></Box>],
] as ToolDef[];
const util2 = [
  ['Relay', <Ic><path d="M3 9H13V5L22 12 13 19V15H3Z" fill="#555" stroke="#222" /></Ic>],
  ['Data dam', <Ic><path d="M3 9H13V5L22 12 13 19V15H3Z" fill="#efefef" stroke="#777" strokeWidth="1.500" /></Ic>],
] as ToolDef[];
const util3 = [
  ['Cluster', <Ic><ellipse cx="9" cy="9" rx="6" ry="7.500" transform="rotate(35 9 9)" fill="url(#pearl)" stroke="#666" /><ellipse cx="8" cy="11" rx="2.500" ry="3" fill="#777" stroke="none" /><ellipse cx="16" cy="15" rx="6" ry="7.500" transform="rotate(35 16 15)" fill="#e0347c" stroke="#7c1042" /><ellipse cx="14" cy="17" rx="2.500" ry="2" fill="#ffd0e2" stroke="none" /></Ic>],
  ['Galapagos', <Ic><path d="M10 3H14V9L20 20Q12 24 4 20L10 9Z" fill="url(#rose)" stroke="#8b2050" /><path d="M9 3H15" stroke="#888" strokeWidth="1.500" /></Ic>],
] as ToolDef[];

const ribbon: { name: string; blocks: ToolDef[][] }[] = [
  { name: 'Geometry', blocks: [hexGeo1, hexGeo2, hexGeo3] },
  { name: 'Primitive', blocks: [hexPrim] },
  { name: 'Input', blocks: [inp1, inp2, inp3, inp4] },
  { name: 'Util', blocks: [util1, util2, util3] },
];
const ribbonTabs = ['Params', 'Maths', 'Sets', 'Vector', 'Curve', 'Surface', 'Mesh', 'Intersect', 'Transform', 'Display', 'Ladybug', 'Honeybee', 'Embryo'];

/* A tilted tube: wide body running from lower left to an open end at upper right. */
const Pipe = ({ fill, top, line = '#333' }: { fill: string; top: string; line?: string }) => (
  <g stroke={line}>
    <path d="M1 11 11 2Q20 1 23 11L14 21Q4 24 1 11Z" fill={fill} />
    <ellipse cx="17" cy="7.500" rx="4.500" ry="7" transform="rotate(-42 17 7.500)" fill={top} />
    <ellipse cx="17" cy="7.500" rx="2.500" ry="4.500" transform="rotate(-42 17 7.500)" />
  </g>
);

/* ---------- canvas parts ---------- */
type NodeProps = {
  name: string; x: number; y: number; w: number; inWidth: number;
  inputs: string[]; outputs: string[]; icon: React.ReactNode; error?: boolean; expandable?: boolean;
};
const ComponentNode = ({ name, x, y, w, inWidth, inputs, outputs, icon, error, expandable }: NodeProps) => (
  <NodeBox $x={x} $y={y} $w={w} aria-label={name}>
    <NodeBody $error={error}>
      <Ports $w={inWidth}>{inputs.map((t, i) => <li key={i}>{t}</li>)}</Ports>
      <NodeIcon>{icon}</NodeIcon>
      <Ports $out>{outputs.map((t, i) => <li key={i}>{t}</li>)}</Ports>
    </NodeBody>
    <NodeFooter $error={error}>VER 0.0.64<br />NOV_20_2018</NodeFooter>
    {expandable && (
      <Expand aria-label="Expand"><svg width="8" height="8" viewBox="0 0 8 8" fill="none" stroke="#333"><path d="M4 0V7M1 4 4 7 7 4" /></svg></Expand>
    )}
  </NodeBox>
);

const NumberSlider = ({ x, y, w, label, min, max, value, reading, ticks }: {
  x: number; y: number; w: number; label: number; min: number; max: number; value: number; reading: number; ticks: number[];
}) => {
  const [v, setV] = useState(value);
  return (
    <InlineNode $x={x} $y={y} $w={w} $h={16}>
      <NodeLabel $w={label}>Number Slider</NodeLabel>
      <Track>
        <svg width="100%" height="14" fill="none" stroke="#aaa">
          <path d={`M${ticks[0]} 7.500H${ticks[ticks.length - 1]}` + ticks.map(t => `M${t + .5} 4V8`).join('')} />
        </svg>
        <input type="range" aria-label="Number Slider" min={min} max={max} value={v} onChange={e => setV(+e.target.value)} />
        <Reading $x={reading}>{v}</Reading>
      </Track>
    </InlineNode>
  );
};

const BooleanToggle = ({ x, y }: { x: number; y: number }) => {
  const [on, setOn] = useState(true);
  return (
    <InlineNode $x={x} $y={y} $w={118} $h={18}>
      <NodeLabel $w={78} $center>Boolean Toggle</NodeLabel>
      <ToggleButton aria-pressed={on} onClick={() => setOn(!on)}>{on ? 'True' : 'False'}</ToggleButton>
    </InlineNode>
  );
};

const ImgIcon = (
  <svg width="18" height="18" viewBox="0 0 18 18" aria-hidden="true">
    <rect x="1" y="1" width="16" height="7" fill="#333" />
    <circle cx="4" cy="4.500" r="2.500" fill="#9ccdf0" /><circle cx="9" cy="4.500" r="2.500" fill="#e0303a" /><circle cx="14" cy="4.500" r="2.500" fill="#ecd84c" />
    <text x="9" y="16" fontSize="8" fontWeight="bold" textAnchor="middle" fontFamily="DejaVu Sans, sans-serif">IMG</text>
  </svg>
);
const RunIcon = (
  <svg width="18" height="18" viewBox="0 0 18 18" aria-hidden="true">
    <rect width="18" height="18" fill="#222" />
    {[3, 9, 15].map((cx, i) => <circle key={cx} cx={cx} cy="4" r="2.800" fill={['#f2ea50', '#f0dc60', '#fbf8c0'][i]} />)}
    {[3, 9, 15].map(cx => <circle key={cx} cx={cx} cy="10" r="2.800" fill="#e02020" />)}
  </svg>
);
const EyeIcon = (
  <svg width="18" height="12" viewBox="0 0 18 12" aria-hidden="true">
    <path d="M1 6 5 1.500M1 6 5 10.500M17 6 13 1.500M17 6 13 10.500" stroke="#f4d6d6" strokeWidth="1.500" fill="none" />
    <circle cx="9" cy="6" r="4.500" fill="#ff3038" stroke="#7d0000" />
  </svg>
);

const GrasshopperCanvas = () => (
  <Canvas>
    <Wires fill="none" stroke="#2a2a26" strokeOpacity=".75" strokeWidth="2.200">
      <g transform="translate(-170 -197)">
        <path d="M165 394C250 350 400 286 745 284" />
        <path d="M165 391C215 352 275 341 350 340" />
        <path d="M302 377C325 377 325 372 350 372" />
        <path d="M310 403C330 403 330 404 350 404" />
        <path d="M303 425C326 425 326 420 350 420" />
        <path d="M303 425C326 425 326 436 350 436" />
        <path d="M522 404C634 404 634 300 745 300" />
        <path d="M675 423C735 423 685 332 745 332" />
        <path d="M675 423C735 423 685 348 745 348" />
        <path d="M1088 484H1107" />
        <path d="M165 617Q182 655 201 705" />
      </g>
    </Wires>
    <NumberSlider x={-41} y={171} w={169} label={72} min={0} max={1} value={1} reading={77} ticks={[6, 19, 32, 45, 58, 71]} />
    <NumberSlider x={-31} y={198} w={168} label={72} min={0} max={5} value={0} reading={13} ticks={[21, 34, 47, 61, 74, 87]} />
    <NumberSlider x={-37} y={220} w={168} label={72} min={0} max={1000} value={400} reading={45} ticks={[8, 16, 24, 32, 72, 80, 88]} />
    <PanelStub />
    <ComponentNode
      name="Image based simulation" x={181} y={134} w={171} inWidth={78} icon={ImgIcon}
      inputs={['_skyFile', '_rhinoViewsName_', '_cameraType_', 'sectionPlane_', '_simulationType_', '_imageWidth_', '_imageHeight_', '_radParameters_', 'backupImages_']}
      outputs={['analysisRecipe']}
    />
    <BooleanToggle x={386} y={217} />
    <ComponentNode
      name="Run daylight simulation" x={576} y={77} w={192} inWidth={92} icon={RunIcon} expandable
      inputs={['_HBObjects', '_analysisRecipe', '------------------', '_writeRad', 'runRad_', '_numOfCPUs_', '-------------------', '', '', '', 'meshSettings_', 'exportAirWalls_', 'additionalRadFiles_', 'overwriteResults_']}
      outputs={['out', 'analysisType', 'resultsUnit', 'results', 'testPts', '', '', 'studyFolder', 'done']}
    />
    <BooleanToggle x={799} y={278} />
    <Balloon />
    <ComponentNode
      name="Glare analysis" x={938} y={201} w={193} inWidth={77} icon={EyeIcon} error
      inputs={['', '', 'taskPositionAngle_', '_runIt']}
      outputs={['', '', '', 'DGI', 'glareComfortRange', 'imageWithTaskArea']}
    />
    <Watermark><strong>Activate Windows</strong>Go to Settings to activate Windows.</Watermark>
    <Compass width="54" height="52" viewBox="0 0 54 52" fill="none" aria-hidden="true">
      <path d="M16 13C6 30 14 46 28 47Q42 47 47 38" stroke="#000" strokeWidth="5" strokeLinecap="round" />
      <path d="M2 21 8 16.500 15 21 8 25Z" fill="#000" /><circle cx="22" cy="7" r="3" fill="#000" />
      <circle cx="31" cy="25" r="19.500" fill="url(#dial)" stroke="#222" strokeWidth="2" />
      <circle cx="31" cy="25" r="18" stroke="#fff" strokeWidth="2.500" />
      <path d="M33 13 30 7H37ZM18 23 12 20V27ZM44 28 50 24V31ZM29 38 26 43H33Z" fill="#fff" />
    </Compass>
  </Canvas>
);

export default function App() {
  const [tab, setTab] = useState('Params');
  return (
    <Desktop>
      <Global />
      <Work>
        <RhinoWindow aria-label="Rhinoceros">
          <RhinoTitle><RhinoMark /><span>2 (25 KB) - Rhinoceros 5.0 [</span></RhinoTitle>
          <RhinoMenuBar><RhinoMenu>{['File', 'Edit', 'View', 'Curve', 'Su'].map(m => <button key={m}>{m}</button>)}</RhinoMenu></RhinoMenuBar>
          <GripRow>
            <Grip />
            <CommandPanel>
              <p>Command: Grasshopper</p>
              <label>Command:<input aria-label="Command" /></label>
            </CommandPanel>
          </GripRow>
          <ToolbarBlock>
            <Grip />
            <ToolbarColumn>
              <ToolTabs>
                <ToolTab $w={61}>Standard</ToolTab>
                <ToolTab $w={58} $on>CPlanes</ToolTab>
                <ToolTab $w={68}>Set Vie</ToolTab>
              </ToolTabs>
              <ToolStrip>{cplaneTools.map(([n, i]) => <button key={n} aria-label={n}>{i}</button>)}</ToolStrip>
            </ToolbarColumn>
          </ToolbarBlock>
          <RhinoBody>
            <Sidebar>
              <ToolGrid>
                {sideTools.map(([n, i, fly]) => <Tool key={n} aria-label={n} $fly={fly}>{i}</Tool>)}
                <Tool aria-label="More tools"><Ic><path d="M14 8 17 11 14 14M18 8 21 11 18 14" strokeWidth="1.500" /></Ic></Tool>
              </ToolGrid>
            </Sidebar>
            <ViewColumn>
              <Viewport>
                <div>
                  <ViewLabel>1<svg width="9" height="14" viewBox="0 0 9 14"><path d="M.5 0V14" stroke="#000" /><path d="M2 5H9L5.500 9Z" /></svg></ViewLabel>
                  <svg width="104" height="36" viewBox="0 0 104 36"><path d="M0 27 104 28.500" stroke="#000" strokeWidth="2" /></svg>
                </div>
                <svg width="104" height="76" viewBox="0 0 104 76" fill="none" stroke="#000">
                  <path d="M1 29V36L3 76" strokeWidth="1.500" /><path d="M1 36 104 32" strokeWidth="2" />
                  <path d="M37 8V40H11M37 40 40 42" stroke="#5a5e64" strokeWidth="1" />
                  <path d="M40 6H45L40 12H45M8 36 14 42M14 36 8 42M41 38 44 44M47 38 43 47H41" stroke="#5a5e64" strokeWidth="1.500" />
                </svg>
              </Viewport>
              <ViewTabs>
                <ViewTab $w={30} $on>1</ViewTab><ViewTab $w={37}>Top</ViewTab><ViewTab $w={48}>Front</ViewTab>
              </ViewTabs>
            </ViewColumn>
          </RhinoBody>
          <Osnap>
            <Grip />
            <SnapList>
              {([['End', true], ['Near', false], ['Point', true]] as [string, boolean][]).map(([n, c]) => (
                <Snap key={n}><input type="checkbox" defaultChecked={c} />{n}</Snap>
              ))}
              <Snap><input type="checkbox" defaultChecked aria-label="Mid" /></Snap>
            </SnapList>
          </Osnap>
          <RhinoStatus><StatusCell $w={57}>CPlane</StatusCell><StatusCell $w={88}>x 1.325</StatusCell><StatusCell $w={88} /></RhinoStatus>
        </RhinoWindow>

        <GhWindow aria-label="Grasshopper">
          <GhTitle>
            <GhName>Grasshopper - 2*</GhName>
            <WinButton aria-label="Minimize"><svg width="11" height="11"><path d="M0 5.500H11" stroke="#000" /></svg></WinButton>
            <WinButton aria-label="Maximize"><svg width="11" height="11"><rect x=".5" y=".5" width="10" height="10" fill="none" stroke="#000" /></svg></WinButton>
            <WinButton aria-label="Close"><svg width="11" height="11"><path d="M.5 .5 10.500 10.500M10.500 .5 .5 10.500" stroke="#000" /></svg></WinButton>
          </GhTitle>
          <GhMenu>{['File', 'Edit', 'View', 'Display', 'Solution', 'Help'].map(m => <button key={m}>{m}</button>)}<span>2</span></GhMenu>
          <RibbonTabs>
            {ribbonTabs.map(t => <RibbonTab key={t} $on={t === tab} onClick={() => setTab(t)}>{t}</RibbonTab>)}
          </RibbonTabs>
          <Ribbon>
            {ribbon.map(g => (
              <Group key={g.name}>
                <GroupTools>
                  {g.blocks.map((b, i) => (
                    <GroupBlock key={i}>{b.map(([n, icon]) => <button key={n} aria-label={n}>{icon}</button>)}</GroupBlock>
                  ))}
                </GroupTools>
                <GroupName><span>{g.name}</span><button aria-label={g.name + ' more'}><svg width="7" height="7"><path d="M3.500 0V7M0 3.500H7" stroke="#bbb" /></svg></button></GroupName>
              </Group>
            ))}
          </Ribbon>
          <CanvasPanel>
            <CanvasBar>
              <BarButton $w={31} aria-label="Open"><svg width="22" height="24" viewBox="0 0 22 24" fill="none"><path d="M4 2H15L18 5V12H4Z" fill="#f4f4f4" stroke="#555" /><path d="M1 12H9L11 9H19V22H1Z" fill="url(#leaf)" stroke="#2a6b10" /></svg></BarButton>
              <BarButton $w={30} aria-label="Save"><svg width="24" height="24" viewBox="0 0 24 24"><path d="M1 1H23V23H4L1 20Z" fill="#2277e0" stroke="#06245e" strokeWidth="1.500" /><rect x="5" y="2" width="14" height="9" fill="#f2f2f2" /><path d="M7 5H17M7 8H17" stroke="#aaa" /><rect x="6" y="14" width="12" height="9" fill="#16386e" /><rect x="7" y="15" width="6" height="8" fill="#ccc" /></svg></BarButton>
              <BarRule $m={4} />
              <Combo>
                <select aria-label="Zoom" defaultValue="80%"><option>50%</option><option>80%</option><option>100%</option></select>
                <svg width="10" height="6"><path d="M.5 .5 5 5 9.500 .5" fill="none" stroke="#444" /></svg>
              </Combo>
              <BarButton $w={28} aria-label="Zoom extents"><svg width="20" height="20" viewBox="0 0 20 20" fill="none" stroke="#111" strokeWidth="2.500"><path d="M1.500 7V2H7M13 2H18.500V7M18.500 13V18H13M7 18H1.500V13" /><path d="M8 8 12 12M12 8 8 12" strokeWidth="1.500" /></svg></BarButton>
              <Caret />
              <BarButton $w={34} aria-label="Named views"><svg width="24" height="18" viewBox="0 0 24 18"><path d="M1 9Q12-3 23 9Q12 20 1 9Z" fill="#fff" stroke="#1a2a3a" strokeWidth="1.500" /><circle cx="12" cy="9" r="6" fill="#3a9bd8" stroke="#0b4f80" /><circle cx="12" cy="9" r="2.500" /></svg></BarButton>
              <Caret />
              <BarButton $w={32} aria-label="Sketch"><svg width="23" height="23" viewBox="0 0 23 23" fill="none"><path d="M1 10Q4 6 5 9Q5 13 3 16Q2 21 9 20" stroke="#5a1a14" strokeWidth="1.500" /><path d="M11 12 18 2 22 8 15 17Z" fill="#e02a20" stroke="#a01810" strokeWidth=".8" /><path d="M11 12 15 17 8 20Z" fill="#f4d3a0" stroke="#5a1a14" strokeWidth=".8" /><path d="M13 12 18 5" stroke="#ff8a80" strokeWidth="1.200" /></svg></BarButton>
              <Spacer />
              <BarButton $w={28} aria-label="No preview"><Ic><g transform="translate(4 0) scale(.72)"><Pipe fill="url(#wire)" top="#fff" line="#888" /></g><path d="M3 17Q12 9 21 17Q12 26 3 17Z" fill="#333" /><path d="M4 19Q12 27 20 19" stroke="#222" /></Ic></BarButton>
              <BarButton $w={30} aria-label="Wireframe preview"><Ic><Pipe fill="#f6f6f6" top="#fff" /><ellipse cx="7.500" cy="15.500" rx="4.500" ry="7" transform="rotate(-42 7.500 15.500)" /><ellipse cx="7.500" cy="15.500" rx="2.500" ry="4.500" transform="rotate(-42 7.500 15.500)" /></Ic></BarButton>
              <BarButton $w={28} $on aria-label="Shaded preview"><Ic><Pipe fill="#c81414" top="#a00606" line="#4a0000" /><path d="M4 11 11 4" stroke="#f07060" strokeWidth="1.500" /></Ic></BarButton>
              <BarRule $m={7} />
              <BarButton $w={28} $on aria-label="Preview selected"><Ic><Pipe fill="url(#wire)" top="#5fb52c" line="#555" /><path d="M7 6 11 2Q20 1 23 11L18 17Z" fill="#5fb52c" stroke="#286b08" /><ellipse cx="17" cy="7.500" rx="3" ry="5" transform="rotate(-42 17 7.500)" fill="#2e5c18" stroke="#a6e07c" /><path d="M1 3 20 22" strokeWidth="1.500" /></Ic></BarButton>
              <BarButton $w={28} aria-label="Document preview"><Ic><circle cx="12" cy="12" r="9.500" fill="url(#pearl)" stroke="#444" /><path d="M12 2.500A9.500 9.500 0 0 0 12 21.500Z" fill="url(#amber)" stroke="#7a3c00" /></Ic></BarButton>
              <BarRule $m={3} />
              <BarButton $w={24} aria-label="Mesh quality"><svg width="21" height="21" viewBox="1 1 23 23"><path d="M8 3 17 3 22 10 19 19 11 22 3 17 3 8Z" fill="#7cc0f4" stroke="#0d3f7a" strokeWidth="1.500" /><path d="M8 6 14 5 12 11 6 12Z" fill="#d6efff" stroke="none" /></svg></BarButton>
              <Caret />
            </CanvasBar>
            <GrasshopperCanvas />
          </CanvasPanel>
          <GhStatus>
            <svg width="16" height="16" viewBox="0 0 16 16"><circle cx="8" cy="8" r="7.500" fill="#1679c8" stroke="#0a2f6e" /><ellipse cx="8" cy="6" rx="1.700" ry="3.500" fill="#0a2f6e" stroke="#fff" /><circle cx="8" cy="12" r="1.500" fill="#fff" /></svg>
            <span>Solution completed in ~169.2 seconds (42 seconds ago)</span>
            <em>0.9.0076</em>
            <svg width="12" height="12" fill="#9a9a9a"><path d="M9 1h2v2h-2zM9 5h2v2h-2zM9 9h2v2h-2zM5 5h2v2h-2zM5 9h2v2h-2zM1 9h2v2h-2z" /></svg>
          </GhStatus>
        </GhWindow>

        <Tooltip role="tooltip">
          <TooltipIcon><svg width="18" height="19" viewBox="0 0 18 19"><path d="M2.500 1H15.500Q17 1 17 2.500V13Q17 14.500 15.500 14.500H12L9 18 6 14.500H2.500Q1 14.500 1 13V2.500Q1 1 2.500 1Z" fill="url(#alert)" stroke="#8a1c0c" /></svg></TooltipIcon>
          <p>1. Failed to find evalglare.exe.<br />Make sure you have evalglare 1.x.x installed at C:\Radiance\binYou can download evalglare from:<br />http://www.ise.fraunhofer.de/en/downloads-englisch/software/evalglare_windows.zip/at_download/file</p>
        </Tooltip>
      </Work>

      <TaskBar>
        <TaskButton aria-label="Start"><svg width="16" height="16" viewBox="0 0 16 16" fill="#fff"><path d="M0 2.200 6.500 1.300V7.500H0ZM7.500 1.200 16 0V7.500H7.500ZM0 8.500H6.500V14.700L0 13.800ZM7.500 8.500H16V16L7.500 14.800Z" /></svg></TaskButton>
        <TaskButton aria-label="File Explorer" $open><svg width="22" height="19" viewBox="0 0 22 19"><path d="M0 1H8L10 3H21V18H0Z" fill="#f4c64e" /><path d="M1 5H22V18H1Z" fill="#fde08c" /><path d="M4 18V11H18V18H14V14H8V18Z" fill="#35a9e6" /></svg></TaskButton>
        <TaskButton aria-label="Rhinoceros" $open $on><RhinoMark s={24} /></TaskButton>
        <Tray>
          <button aria-label="Show hidden icons"><svg width="12" height="7" fill="none" stroke="#fff" strokeWidth="1.200"><path d="M.5 6.500 6 1 11.500 6.500" /></svg></button>
          <button aria-label="Autodesk"><svg width="18" height="16" viewBox="0 0 18 16"><path d="M1 14 6 1H10L5 15Z" fill="#8fc04a" /><path d="M9 9 16 15H11L6 11Z" fill="#2a7ad0" /><circle cx="12" cy="5.500" r="4.500" fill="#e85a20" /><path d="M14 4A2.500 2.500 0 1 0 14.500 6.500" stroke="#fff" strokeWidth="1.400" fill="none" /></svg></button>
          <button aria-label="Download manager"><svg width="16" height="16" viewBox="0 0 16 16"><circle cx="9" cy="6" r="5.500" fill="#3d7fd6" /><path d="M5 2Q10 3 8 8" stroke="#9fd45a" strokeWidth="2" fill="none" /><path d="M0 9Q5 6 7 11L12 7 14 12 6 15Z" fill="#2fae2f" /><path d="M0 10Q3 8 5 12" stroke="#f2d33c" strokeWidth="2" fill="none" /></svg></button>
          <button aria-label="Battery"><svg width="16" height="12" viewBox="0 0 16 12" fill="none" stroke="#fff"><path d="M1 0V3M4 0V3M.5 3H4.500V5L2.500 7V11M6 3.500H14V10.500H4M15.500 5.500V8.500M6.500 5 10.500 9M10.500 5 6.500 9" /></svg></button>
          <button aria-label="Volume"><svg width="17" height="14" viewBox="0 0 17 14" fill="none" stroke="#fff"><path d="M.5 4.500H3L6.500 1V13L3 9.500H.5ZM9 5Q10.500 7 9 9M11.500 3Q14 7 11.500 11M14 1Q18 7 14 13" /></svg></button>
          <button aria-label="Network"><svg width="14" height="14" viewBox="0 0 14 14" fill="none" stroke="#fff"><path d="M1 13Q1 2 13 1M4 13Q4 5 13 4.500M7 13Q7 8 13 8" /><circle cx="11" cy="12" r="1.500" fill="#fff" stroke="none" /></svg></button>
          <button aria-label="Notifications"><svg width="16" height="16" viewBox="0 0 16 16"><path d="M0 1H16V13H10L8 15.500 6 13H0Z" fill="#fff" /><path d="M3 4.500H13M3 7.500H13M3 10.500H9" stroke="#000" /></svg></button>
          <Lang>ENG</Lang>
          <Clock>7:43 PM<br />1/1/2019</Clock>
          <PeekEdge />
        </Tray>
      </TaskBar>
      <Defs />
    </Desktop>
  );
}
